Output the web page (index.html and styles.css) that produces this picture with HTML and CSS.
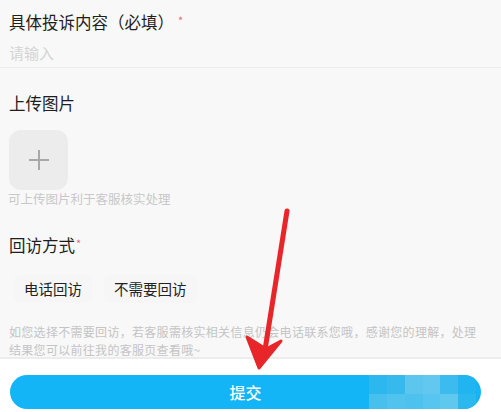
FILE: index.html
```html
<!DOCTYPE html>
<html lang="zh">
<head>
<meta charset="utf-8">
<link rel="stylesheet" href="styles.css">
</head>
<body>
<div class="page">
  <div class="field">
    <div class="label">具体投诉内容（必填）<span class="req">*</span></div>
    <div class="placeholder">请输入</div>
  </div>
  <div class="upload">
    <div class="label">上传图片</div>
    <div class="upbox"><svg width="22" height="22" viewBox="0 0 22 22"><path d="M11 1V21M1 11H21" stroke="#a8a8a8" stroke-width="2"/></svg></div>
    <div class="hint">可上传图片利于客服核实处理</div>
  </div>
  <div class="visit">
    <div class="label">回访方式<span class="req">*</span></div>
    <div class="options">
      <div class="opt">电话回访</div>
      <div class="opt">不需要回访</div>
    </div>
    <div class="note">如您选择不需要回访，若客服需核实相关信息仍会电话联系您哦，感谢您的理解，处理结果您可以前往我的客服页查看哦~</div>
  </div>
  <div class="footer">
    <div class="submit">提交
      <div class="mosaic">
        <i style="background:#2cb8ee"></i><i style="background:#36baed"></i><i style="background:#5cc6ee"></i><i style="background:#62c8ef"></i><i style="background:#3cbcee"></i><i style="background:#20b5f0"></i>
        <i style="background:#48c0ee"></i><i style="background:#50c3ee"></i><i style="background:#4ec2ee"></i><i style="background:#56c5ef"></i><i style="background:#5ec8ef"></i><i style="background:#2bb8ef"></i>
      </div>
    </div>
  </div>
  <svg class="arrow" width="80" height="180" viewBox="0 0 80 180">
    <path d="M57 11 L35 150" stroke="#e8262a" stroke-width="5" stroke-linecap="round" fill="none"/>
    <path d="M17 137 L29 168 L51 141 L36 149 Z" fill="#e8262a" stroke="#e8262a" stroke-width="3" stroke-linejoin="round"/>
  </svg>
</div>
</body>
</html>
```
FILE: styles.css
```css
* { box-sizing: border-box; }
html, body { margin: 0; padding: 0; }
body {
  background: #f8f8f8;
  font-family: "Noto Sans CJK SC", "Noto Sans", sans-serif;
  width: 501px;
  height: 412px;
  overflow: hidden;
}
.page { position: relative; height: 412px; }
.label {
  font-size: 16.5px;
  font-weight: 400;
  line-height: 20px;
  color: #1e1e1e;
  padding-left: 9px;
}
.req { color: #e26a7a; font-size: 11px; margin-left: 4px; vertical-align: 4px; }
.visit .req { margin-left: 1px; }
.field { padding-top: 10px; border-bottom: 1px solid #ececec; height: 68px; }
.placeholder {
  font-size: 15px;
  line-height: 20px;
  color: #d4d4d4;
  padding-left: 9px;
  margin-top: 11px;
}
.upload { padding-top: 25px; }
.upbox {
  width: 59px;
  height: 60px;
  margin: 17px 0 0 9px;
  background: #ececec;
  border-radius: 12px;
  display: flex;
  align-items: center;
  justify-content: center;
}
.hint {
  font-size: 12.5px;
  line-height: 16px;
  color: #c8c8c8;
  padding-left: 8px;
  margin-top: 1px;
}
.visit { padding-top: 26px; }
.options { display: flex; gap: 12px; margin-top: 20px; padding-left: 14px; }
.opt {
  font-size: 14.5px;
  font-weight: 400;
  line-height: 28px;
  color: #222;
  padding: 0 10px;
  border-radius: 6px;
  background: #f6f6f6;
}
.note {
  font-size: 12px;
  line-height: 18px;
  color: #c4c4c4;
  padding: 0 18px 0 9px;
  margin-top: 20px;
  letter-spacing: 0.3px;
}
.footer {
  position: absolute;
  left: 0; right: 0; bottom: 0;
  height: 55px;
  background: #fff;
  border-top: 2px solid #ececec;
  padding: 16px 20px 0 10px;
}
.submit {
  position: relative;
  height: 34px;
  border-radius: 17px;
  background: #13b5f6;
  color: #fff;
  font-size: 16px;
  font-weight: 500;
  line-height: 34px;
  text-align: center;
  overflow: hidden;
}
.mosaic {
  position: absolute;
  left: 359px;
  top: 0;
  width: 107px;
  height: 38px;
  display: grid;
  grid-template-columns: repeat(6, 1fr);
  grid-template-rows: 1fr 1fr;
}
.mosaic i { display: block; }
.arrow { position: absolute; left: 230px; top: 200px; }
```
